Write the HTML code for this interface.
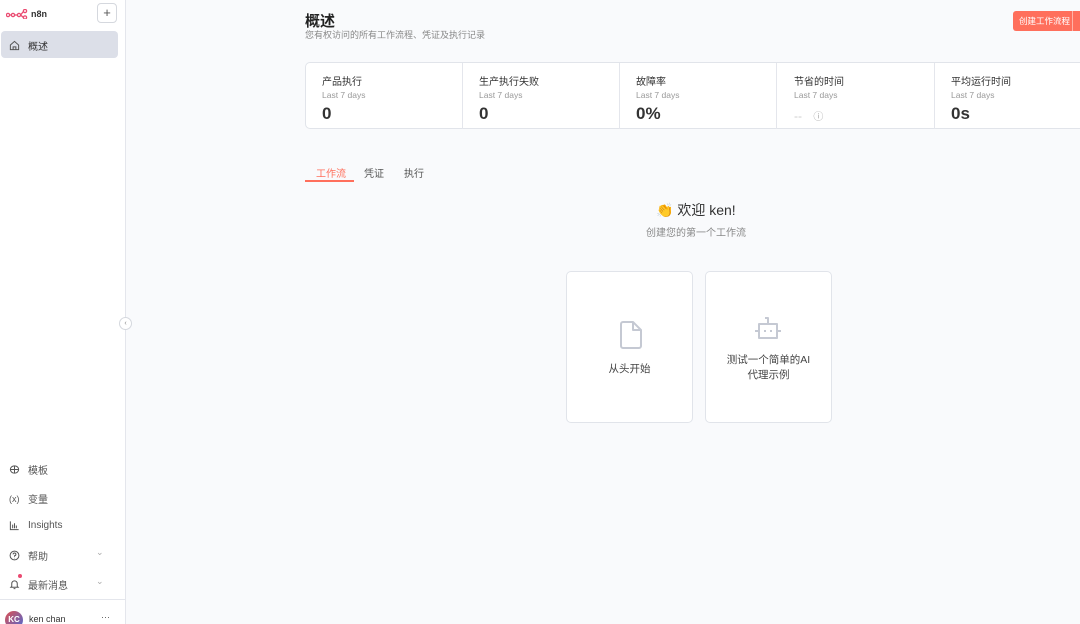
<!DOCTYPE html>
<html><head><meta charset="utf-8"><style>
*{box-sizing:border-box;margin:0;padding:0}
html,body{overflow:hidden}
body{width:1080px;height:624px;background:#f9fafc;font-family:"Liberation Sans","Noto Sans CJK SC",sans-serif;color:#333;position:relative}
.side{position:absolute;left:0;top:0;width:126px;height:624px;background:#fff;border-right:1px solid #e4e6ec}
.abs{position:absolute}
.nav{position:absolute;left:9px;font-size:10px;color:#555;display:flex;align-items:center;gap:8px}
.card{position:absolute;background:#fff;border:1px solid #e1e4ea;border-radius:5px}
.stat{position:absolute;top:0;height:66px;width:157px;border-right:1px solid #e4e6ec;padding:10px 16px}
.stat .t{font-size:10px;color:#333}
.stat .s{font-size:8.5px;color:#999;margin-top:2px}
.stat .v{font-size:17px;color:#333;margin-top:4px;font-weight:bold}
</style></head><body>
<div class="side">
  <svg class="abs" style="left:6px;top:9px" width="22" height="10" viewBox="0 0 22 10"><g fill="none" stroke="#ea4b71" stroke-width="1.3"><circle cx="2" cy="6" r="1.6"/><circle cx="7" cy="6" r="1.6"/><circle cx="13" cy="6" r="1.6"/><circle cx="19" cy="2" r="1.6"/><circle cx="19" cy="8.5" r="1.6"/><path d="M3.6 6h1.8M8.6 6h2.8M14.6 6l2.8-3.5M14.6 6l2.8 2.5"/></g></svg>
  <div class="abs" style="left:31px;top:9px;font-size:9px;font-weight:bold;color:#333">n8n</div>
  <div class="abs" style="left:97px;top:3px;width:20px;height:20px;border:1px solid #d5d8de;border-radius:4px;font-size:13px;line-height:17px;text-align:center;color:#555">+</div>
  <div class="abs" style="left:1px;top:31px;width:117px;height:27px;background:#dcdfe8;border-radius:4px"></div>
  <div class="nav" style="top:38px"><svg width="11" height="11" viewBox="0 0 12 12" fill="none" stroke="#555" stroke-width="1.1"><path d="M1.5 5.5L6 1.5l4.5 4V10.5h-9z M4.5 10.5V7.5h3v3"/></svg><span style="color:#333">概述</span></div>
  <div class="nav" style="top:462px"><svg width="11" height="11" viewBox="0 0 12 12" fill="none" stroke="#555" stroke-width="1.1"><ellipse cx="6" cy="6" rx="4.5" ry="4"/><path d="M1.5 6h9M6 2v8"/></svg>模板</div>
  <div class="nav" style="top:491px"><span style="font-size:9px;width:11px">(x)</span>变量</div>
  <div class="nav" style="top:520px"><svg width="11" height="11" viewBox="0 0 12 12" fill="none" stroke="#555" stroke-width="1.1"><path d="M1.5 1.5v9h9M4 9V5M6 9V3.5M8 9V6"/></svg>Insights</div>
  <div class="nav" style="top:548px"><svg width="11" height="11" viewBox="0 0 12 12" fill="none" stroke="#555" stroke-width="1.1"><circle cx="6" cy="6" r="4.8"/><path d="M4.5 4.8a1.5 1.5 0 1 1 1.5 1.5v1M6 8.6v.4"/></svg>帮助</div>
  <div class="nav" style="top:577px"><svg width="11" height="11" viewBox="0 0 12 12" fill="none" stroke="#555" stroke-width="1.1"><path d="M3 8V5a3 3 0 0 1 6 0v3l1 1H2zM5 10.5h2"/></svg>最新消息</div>
  <div class="abs" style="left:18px;top:574px;width:4px;height:4px;border-radius:50%;background:#ea4b71"></div>
  <div class="abs" style="left:96px;top:547px;font-size:9px;color:#aaa">⌄</div>
  <div class="abs" style="left:96px;top:576px;font-size:9px;color:#aaa">⌄</div>
  <div class="abs" style="left:0;top:599px;width:126px;border-top:1px solid #e4e6ec"></div>
  <div class="abs" style="left:5px;top:611px;width:18px;height:18px;border-radius:50%;background:linear-gradient(135deg,#e05050,#4a6bd6);color:#fff;font-size:8px;font-weight:bold;text-align:center;line-height:18px">KC</div>
  <div class="abs" style="left:29px;top:614px;font-size:9px;color:#333">ken chan</div>
  <div class="abs" style="left:101px;top:612px;font-size:9px;color:#555">···</div>
</div>
<div class="abs" style="left:119px;top:317px;width:13px;height:13px;border:1px solid #d5d8de;border-radius:50%;background:#fff;font-size:7px;color:#888;text-align:center;line-height:11px">‹</div>

<div class="abs" style="left:305px;top:10px;font-size:15px;font-weight:bold;color:#222">概述</div>
<div class="abs" style="left:305px;top:28px;font-size:9px;color:#888">您有权访问的所有工作流程、凭证及执行记录</div>
<div class="abs" style="left:1013px;top:11px;width:67px;height:20px;background:#ff6f5c;border-radius:3px 0 0 3px;color:#fff;font-size:8.5px;line-height:20px;padding-left:6px">创建工作流程</div>
<div class="abs" style="left:1072px;top:11px;width:1px;height:20px;background:#ffb3a8"></div>

<div class="card" style="left:305px;top:62px;width:790px;height:67px">
  <div class="stat" style="left:0"><div class="t">产品执行</div><div class="s">Last 7 days</div><div class="v">0</div></div>
  <div class="stat" style="left:157px"><div class="t">生产执行失败</div><div class="s">Last 7 days</div><div class="v">0</div></div>
  <div class="stat" style="left:314px"><div class="t">故障率</div><div class="s">Last 7 days</div><div class="v">0%</div></div>
  <div class="stat" style="left:472px"><div class="t">节省的时间</div><div class="s">Last 7 days</div><div class="v" style="color:#ccc;font-size:12px;margin-top:8px;font-weight:normal">-- <span style="font-size:10px;color:#aaa;margin-left:8px">ⓘ</span></div></div>
  <div class="stat" style="left:629px;border:none"><div class="t">平均运行时间</div><div class="s">Last 7 days</div><div class="v">0s</div></div>
</div>

<div class="abs" style="left:316px;top:165px;font-size:10px;color:#ff6f5c">工作流</div>
<div class="abs" style="left:364px;top:165px;font-size:10px;color:#555">凭证</div>
<div class="abs" style="left:404px;top:165px;font-size:10px;color:#555">执行</div>
<div class="abs" style="left:305px;top:180px;width:49px;height:2px;background:#ff6f5c"></div>

<div class="abs" style="left:656px;top:200px;font-size:14px;color:#333">👏 欢迎 ken!</div>
<div class="abs" style="left:646px;top:224px;font-size:10px;color:#888">创建您的第一个工作流</div>

<div class="card" style="left:566px;top:271px;width:127px;height:152px">
  <svg class="abs" style="left:51px;top:48px" width="26" height="30" viewBox="0 0 26 30" fill="none" stroke="#c5c9d3" stroke-width="2" stroke-linejoin="round"><path d="M3 4a2 2 0 0 1 2-2h10l8 8v16a2 2 0 0 1-2 2H5a2 2 0 0 1-2-2z M15 2v8h8"/></svg>
  <div class="abs" style="left:0;width:125px;top:89px;text-align:center;font-size:10.5px;color:#444">从头开始</div>
</div>
<div class="card" style="left:705px;top:271px;width:127px;height:152px">
  <svg class="abs" style="left:47px;top:44px" width="30" height="26" viewBox="0 0 30 26" fill="none" stroke="#c5c9d3" stroke-width="2" stroke-linejoin="round"><path d="M12 2h3v6M6 8h18v14H6z M2 15h4M24 15h4 M12 14v2M18 14v2"/></svg>
  <div class="abs" style="left:0;width:125px;top:81px;text-align:center;font-size:10.5px;color:#444;line-height:15px">测试一个简单的AI<br>代理示例</div>
</div>
</body></html>
